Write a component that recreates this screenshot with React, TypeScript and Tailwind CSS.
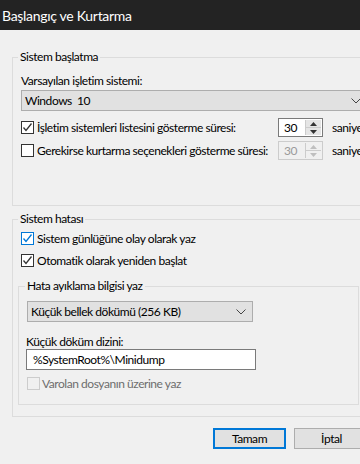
import React from "react";

const font = { fontFamily: 'Lato, "Noto Sans", sans-serif' };

function Check({ checked, variant = "normal" }: { checked?: boolean; variant?: "normal" | "focus" | "disabled" }) {
  const border = variant === "focus" ? "border-[#0078d7]" : variant === "disabled" ? "border-[#cccccc]" : "border-[#333333]";
  const bg = variant === "disabled" ? "bg-[#f0f0f0]" : "bg-white";
  const stroke = variant === "focus" ? "#0078d7" : "#333333";
  return (
    <span className={`flex h-[13px] w-[13px] shrink-0 items-center justify-center border ${border} ${bg}`}>
      {checked && (
        <svg width="11" height="11" viewBox="0 0 11 11">
          <polyline points="1.5,5.5 4,8.5 9.5,1.5" fill="none" stroke={stroke} strokeWidth="1.3" />
        </svg>
      )}
    </span>
  );
}

function Spin({ disabled }: { disabled?: boolean }) {
  const border = disabled ? "border-[#cccccc]" : "border-[#7a7a7a]";
  const arrow = disabled ? "#bfbfbf" : "#333333";
  return (
    <div className={`flex h-[19px] w-[45px] border ${border} ${disabled ? "bg-[#f0f0f0]" : "bg-white"}`}>
      <div className={`flex flex-1 items-center pl-[5px] ${disabled ? "text-[#9a9a9a]" : "text-black"}`}>30</div>
      <div className="my-[1px] mr-[1px] flex w-[16px] flex-col border-l border-[#cccccc]">
        <div className={`flex flex-1 items-center justify-center border-b border-[#cccccc] ${disabled ? "bg-[#f0f0f0]" : "bg-[#e5e5e5]"}`}>
          <svg width="7" height="4" viewBox="0 0 7 4"><polygon points="0,4 7,4 3.5,0" fill={arrow} /></svg>
        </div>
        <div className={`flex flex-1 items-center justify-center ${disabled ? "bg-[#f0f0f0]" : "bg-[#e5e5e5]"}`}>
          <svg width="7" height="4" viewBox="0 0 7 4"><polygon points="0,0 7,0 3.5,4" fill={arrow} /></svg>
        </div>
      </div>
    </div>
  );
}

function Chevron() {
  return (
    <svg width="10" height="6" viewBox="0 0 10 6">
      <polyline points="0.5,0.5 5,5 9.5,0.5" fill="none" stroke="#444444" strokeWidth="1" />
    </svg>
  );
}

export default function App() {
  return (
    <div className="h-[464px] w-[360px] overflow-hidden whitespace-nowrap bg-[#f0f0f0] text-[12px] leading-[16px] tracking-[-0.45px] text-black" style={font}>
      <div className="flex h-[30px] items-center bg-[#232323] pl-[2px] pt-[1px] text-[14px] tracking-[-0.3px] text-white">Başlangıç ve Kurtarma</div>
      <div className="w-[392px] pl-[12px]">
        <fieldset className="mt-[19px] border border-[#dcdcdc] pb-[45px] pl-[8px]">
          <legend className="ml-[-3px] px-[2px]">Sistem başlatma</legend>
          <div className="mt-[8px]">Varsayılan işletim sistemi:</div>
          <div className="mt-[1px] flex h-[21px] w-[352px] items-center justify-between border border-[#adadad] bg-[#e1e1e1] pl-[3px] pr-[11px]">
            <span>Windows&nbsp; 10</span>
            <Chevron />
          </div>
          <div className="mt-[7px] grid grid-cols-[257px_45px_auto] items-center gap-y-[4px]">
            <label className="flex items-center gap-[3px]">
              <Check checked />
              <span>İşletim sistemleri listesini gösterme süresi:</span>
            </label>
            <Spin />
            <span className="pl-[9px]">saniye</span>
            <label className="flex items-center gap-[3px]">
              <Check />
              <span>Gerekirse kurtarma seçenekleri gösterme süresi:</span>
            </label>
            <Spin disabled />
            <span className="pl-[9px]">saniye</span>
          </div>
        </fieldset>
        <fieldset className="mt-[5px] border border-[#dcdcdc] pb-[11px] pl-[8px]">
          <legend className="ml-[-3px] px-[2px]">Sistem hatası</legend>
          <label className="mt-[4px] flex h-[15px] items-center gap-[3px]">
            <Check checked variant="focus" />
            <span>Sistem günlüğüne olay olarak yaz</span>
          </label>
          <label className="mt-[7px] flex h-[15px] items-center gap-[3px]">
            <Check checked />
            <span>Otomatik olarak yeniden başlat</span>
          </label>
          <fieldset className="ml-[-3px] mt-[10px] w-[341px] border border-[#dcdcdc] pb-[13px] pl-[8px]">
            <legend className="ml-[-2px] px-[2px]">Hata ayıklama bilgisi yaz</legend>
            <div className="mt-[7px] flex h-[21px] w-[226px] items-center justify-between border border-[#adadad] bg-[#e1e1e1] pl-[3px] pr-[6px]">
              <span>Küçük bellek dökümü (256 KB)</span>
              <Chevron />
            </div>
            <div className="ml-[-1px] mt-[13px] leading-[14px]">Küçük döküm dizini:</div>
            <div className="ml-[-1px] flex h-[21px] w-[230px] items-center border border-[#7a7a7a] bg-white pl-[6px]">%SystemRoot%\Minidump</div>
            <label className="mt-[6px] flex h-[15px] items-center gap-[2px]">
              <Check variant="disabled" />
              <span className="text-[#6d6d6d]">Varolan dosyanın üzerine yaz</span>
            </label>
          </fieldset>
        </fieldset>
        <div className="ml-[201px] mt-[11px] flex gap-[8px]">
          <button className="flex h-[21px] w-[73px] items-center justify-center border-2 border-[#0078d7] bg-[#e1e1e1]">Tamam</button>
          <button className="flex h-[21px] w-[75px] items-center justify-center border border-[#adadad] bg-[#e1e1e1]">İptal</button>
        </div>
      </div>
    </div>
  );
}
